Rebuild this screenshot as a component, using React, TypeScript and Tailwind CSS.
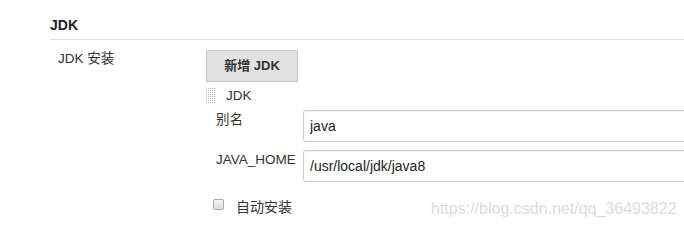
import React from "react"

const font = { fontFamily: '"Liberation Sans", Arial, "Noto Sans CJK SC", sans-serif' }

// dotted drag handle next to the installation block title
function Grip() {
  const dots = []
  for (let r = 0; r < 8; r++) {
    for (let c = 0; c < 5; c++) {
      dots.push(<rect key={`${r}-${c}`} x={c * 2} y={r * 2} width="1" height="1" fill="#b5b5b5" />)
    }
  }
  return (
    <svg width="10" height="16" viewBox="0 0 10 16" className="shrink-0">
      {dots}
    </svg>
  )
}

function Field({ label, value }: { label: string; value: string }) {
  return (
    <div className="flex">
      <div className="w-[87px] shrink-0 pt-[1px] text-[13.5px] leading-[18px] text-[#333]">{label}</div>
      <input
        readOnly
        value={value}
        className="h-[32px] w-[500px] shrink-0 rounded-[3px] border border-[#ccc] bg-white px-[6px] text-[14px] text-[#222] shadow-[inset_0_1px_1px_rgba(0,0,0,0.06)] outline-none"
        style={font}
      />
    </div>
  )
}

export default function App() {
  return (
    <div className="relative h-[229px] w-[684px] overflow-hidden bg-white text-[#333]" style={font}>
      <div className="ml-[50px] border-b border-[#e3e3e3] pt-[15px] pb-[4px] text-[14px] font-bold leading-[20px] text-[#222]">
        JDK
      </div>

      <div className="mt-[10px] flex">
        <div className="w-[206px] shrink-0 pl-[58px] text-[13.5px] leading-[18px]">JDK 安装</div>

        <div className="flex min-w-0 flex-1 flex-col">
          <button className="flex h-[32px] w-[92px] items-center justify-center border border-[#c9c9c9] bg-[#e2e2e2] text-[13px] font-bold text-[#333]">
            新增 JDK
          </button>

          <div className="mt-[6px] flex h-[16px] items-center gap-[10px]">
            <Grip />
            <span className="text-[13.5px] leading-[16px]">JDK</span>
          </div>

          <div className="mt-[6px] flex flex-col gap-[8px] pl-[10px]">
            <Field label="别名" value="java" />
            <Field label="JAVA_HOME" value="/usr/local/jdk/java8" />
          </div>

          <label className="mt-[16px] flex h-[18px] items-start gap-[12px] pl-[7px]">
            <span className="mt-[1px] h-[11px] w-[11px] rounded-[2px] border border-[#a9a9a9] bg-gradient-to-b from-[#f4f4f4] to-[#dedede]" />
            <span className="text-[14px] leading-[18px]">自动安装</span>
          </label>
        </div>
      </div>

      <div className="absolute left-[431px] top-[199px] text-[16px] leading-[20px] text-[#dcdcdc]">
        https://blog.csdn.net/qq_36493822
      </div>
    </div>
  )
}
